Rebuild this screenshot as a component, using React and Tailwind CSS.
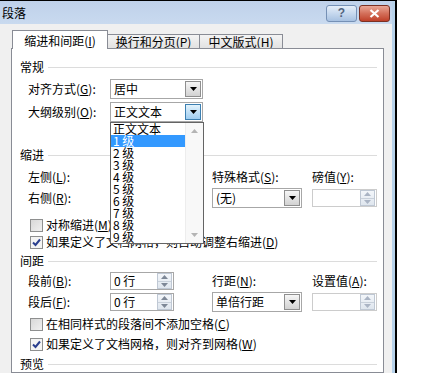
import React from "react";

const K = ({ k }) => (
  <span>
    (<span className="underline">{k}</span>)
  </span>
);

const Down = ({ color = "#000000" }) => (
  <svg width="7" height="4" viewBox="0 0 7 4">
    <polygon points="0,0 7,0 3.5,4" fill={color} />
  </svg>
);

const Up = ({ color = "#000000" }) => (
  <svg width="7" height="4" viewBox="0 0 7 4">
    <polygon points="0,4 7,4 3.5,0" fill={color} />
  </svg>
);

const SectionTitle = ({ title }) => (
  <div className="flex items-center h-[16px] pl-[8px] pr-[6px]">
    <span className="leading-none">{title}</span>
    <div className="flex-1 h-px bg-[#dcdcdc] ml-[4px]" />
  </div>
);

const levels = ["正文文本", "1 级", "2 级", "3 级", "4 级", "5 级", "6 级", "7 级", "8 级", "9 级"];

// open list of the outline level combo
const Dropdown = () => (
  <div className="absolute left-[-1px] top-[19px] z-20 w-[94px] h-[122px] border border-[#646464] bg-white flex">
    <div className="flex-1 flex flex-col">
      {levels.map((it, i) => (
        <div
          key={it}
          className={
            "h-[12px] leading-[12px] pl-[2px] whitespace-nowrap " +
            (i === 1 ? "bg-[#3399ff] text-white" : "")
          }
        >
          {it}
        </div>
      ))}
    </div>
    <div className="w-[18px] bg-[#f8f8f8] border-l border-[#ededed] flex flex-col justify-between items-center py-[6px]">
      <Up color="#b4b4b4" />
      <Down color="#b4b4b4" />
    </div>
  </div>
);

const ComboBox = ({ text, className, active, children }) => (
  <div className={"relative flex items-center h-[20px] bg-white border border-[#a7a7a7] " + className}>
    <span className="flex-1 pl-[3px] leading-none whitespace-nowrap">{text}</span>
    <div
      className={
        "w-[16px] h-[16px] mr-px flex items-center justify-center border " +
        (active
          ? "border-[#3c7fb1] bg-linear-to-b from-[#e3f3fc] to-[#9fcdf0]"
          : "border-[#8f8f8f] bg-linear-to-b from-[#f6f6f6] to-[#d2d2d2]")
      }
    >
      <Down />
    </div>
    {children}
  </div>
);

const Spin = ({ text, className, disabled }) => (
  <div
    className={
      "flex items-center h-[18px] bg-white border " +
      (disabled ? "border-[#cccccc] " : "border-[#a7a7a7] ") +
      className
    }
  >
    <span className="flex-1 pl-[3px] leading-none whitespace-nowrap">{text}</span>
    <div className="w-[15px] h-[16px] mr-px flex flex-col border border-[#bfc8d4] bg-linear-to-b from-[#f3f6fa] to-[#dfe6ee]">
      <div className="flex-1 flex items-center justify-center border-b border-[#c8d0da]">
        <Up color={disabled ? "#aab4c4" : "#7d8796"} />
      </div>
      <div className="flex-1 flex items-center justify-center">
        <Down color={disabled ? "#aab4c4" : "#7d8796"} />
      </div>
    </div>
  </div>
);

const Check = ({ checked, children, className = "" }) => (
  <div className={"flex items-center h-[16px] pl-[18px] " + className}>
    <div
      className={
        "w-[13px] h-[13px] border border-[#8e8f8f] flex items-center justify-center " +
        (checked ? "bg-[#f4f4f4]" : "bg-linear-to-br from-[#d8d8d8] to-[#f0f0f0]")
      }
    >
      {checked && (
        <svg width="9" height="9" viewBox="0 0 9 9">
          <path d="M1 4.5 L3.5 7 L8 1.5" stroke="#2a3f8f" strokeWidth="2" fill="none" />
        </svg>
      )}
    </div>
    <span className="ml-[3px] leading-none whitespace-nowrap">{children}</span>
  </div>
);

const Tab = ({ active, className, children }) => (
  <div
    className={
      "flex items-center justify-center border border-b-0 border-[#898c95] whitespace-nowrap " +
      (active ? "h-[19px] bg-white relative z-10 mb-[-1px] pt-[2px]" : "h-[14px] bg-linear-to-b from-[#f4f4f4] to-[#e2e2e2]") +
      " " +
      className
    }
  >
    <span className="leading-none">{children}</span>
  </div>
);

const App = () => {
  return (
    <div className="w-[422px] h-[373px] overflow-hidden bg-white flex text-[12px] text-black font-['Noto_Sans_CJK_SC','Liberation_Sans',sans-serif]">
      <div className="w-[397px] h-full flex border-t border-black border-r-2 border-r-black">
        <div className="w-[392px] h-full flex flex-col">
          {/* title bar */}
          <div className="h-[27px] flex items-center bg-linear-to-b from-[#bfd1ea] to-[#c9daef]">
            <span className="pl-[2px] flex-1 leading-none">段落</span>
            <div className="flex gap-[2px] pr-[2px] pt-px">
              <div className="w-[31px] h-[17px] rounded-[3px] border border-[#7590b5] bg-linear-to-b from-[#e6eef8] via-[#c6d8ee] to-[#a7c1e1] flex items-center justify-center">
                <span className="text-[12px] leading-none font-bold text-[#52647f] font-['Liberation_Sans',sans-serif]">?</span>
              </div>
              <div className="w-[31px] h-[17px] rounded-[3px] border border-[#7b3023] bg-linear-to-b from-[#eaa696] via-[#d36f5a] to-[#bf3f28] flex items-center justify-center">
                <svg width="11" height="9" viewBox="0 0 11 9">
                  <path d="M1.5 1 L9.5 8 M9.5 1 L1.5 8" stroke="#ffffff" strokeWidth="2.2" />
                </svg>
              </div>
            </div>
          </div>

          {/* body */}
          <div className="flex-1 flex flex-col bg-[#f0f0f0]">
            <div className="flex items-end h-[18px] mt-[6px] pl-[12px]">
              <Tab active className="w-[96px]">
                缩进和间距<K k="I" />
              </Tab>
              <Tab className="w-[92px] border-l-0">
                换行和分页<K k="P" />
              </Tab>
              <Tab className="w-[83px] border-l-0">
                中文版式<K k="H" />
              </Tab>
            </div>

            <div className="flex-1 ml-[11px] mr-[8px] border border-[#898c95] bg-white flex flex-col">
              <div className="pt-[10px]">
                <SectionTitle title="常规" />
              </div>
              <div className="flex items-center h-[20px] mt-[4px] pl-[16px]">
                <div className="w-[82px] leading-none">
                  对齐方式<K k="G" />:
                </div>
                <ComboBox text="居中" className="w-[93px]" />
              </div>
              <div className="flex items-center h-[20px] mt-[3px] pl-[16px] relative z-20">
                <div className="w-[82px] leading-none">
                  大纲级别<K k="O" />:
                </div>
                <ComboBox text="正文文本" className="w-[93px]" active>
                  <Dropdown />
                </ComboBox>
              </div>

              <div className="mt-[25px]">
                <SectionTitle title="缩进" />
              </div>
              <div className="flex items-center h-[20px] mt-[4px] pl-[16px]">
                <div className="w-[82px] leading-none">
                  左侧<K k="L" />:
                </div>
                <Spin text="" className="w-[64px]" />
                <div className="w-[38px]" />
                <div className="w-[100px] leading-none">
                  特殊格式<K k="S" />:
                </div>
                <div className="leading-none">
                  磅值<K k="Y" />:
                </div>
              </div>
              <div className="flex items-center h-[20px] mt-px pl-[16px]">
                <div className="w-[82px] leading-none">
                  右侧<K k="R" />:
                </div>
                <Spin text="" className="w-[64px]" />
                <div className="w-[38px]" />
                <ComboBox text="(无)" className="w-[90px]" />
                <div className="w-[10px]" />
                <Spin text="" className="w-[65px]" disabled />
              </div>
              <Check className="mt-[9px]">
                对称缩进<K k="M" />
              </Check>
              <Check checked className="mt-px">
                如果定义了文档网格，则自动调整右缩进<K k="D" />
              </Check>

              <div className="mt-[3px]">
                <SectionTitle title="间距" />
              </div>
              <div className="flex items-center h-[20px] mt-[2px] pl-[16px]">
                <div className="w-[82px] leading-none">
                  段前<K k="B" />:
                </div>
                <Spin text="0 行" className="w-[64px]" />
                <div className="w-[38px]" />
                <div className="w-[100px] leading-none">
                  行距<K k="N" />:
                </div>
                <div className="leading-none">
                  设置值<K k="A" />:
                </div>
              </div>
              <div className="flex items-center h-[20px] mt-px pl-[16px]">
                <div className="w-[82px] leading-none">
                  段后<K k="F" />:
                </div>
                <Spin text="0 行" className="w-[64px]" />
                <div className="w-[38px]" />
                <ComboBox text="单倍行距" className="w-[90px]" />
                <div className="w-[10px]" />
                <Spin text="" className="w-[65px]" disabled />
              </div>
              <Check className="mt-[4px]">
                在相同样式的段落间不添加空格<K k="C" />
              </Check>
              <Check checked className="mt-[4px]">
                如果定义了文档网格，则对齐到网格<K k="W" />
              </Check>

              <div className="mt-[4px]">
                <SectionTitle title="预览" />
              </div>
            </div>
          </div>
        </div>
        <div className="w-[3px] h-full bg-[#b7d2ea]" />
      </div>
    </div>
  );
};

export default App;
